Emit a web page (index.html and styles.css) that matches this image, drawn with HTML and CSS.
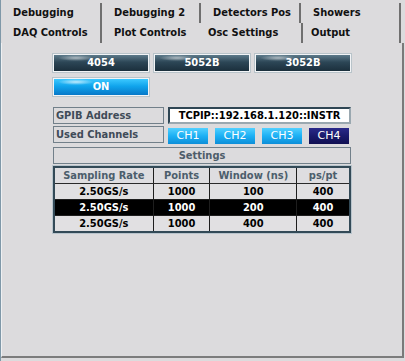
FILE: index.html
```html
<!DOCTYPE html>
<html lang="en">
<head>
    <meta charset="UTF-8">
    <title>Osc Settings</title>
    <link rel="stylesheet" href="styles.css">
</head>
<body>
    <div class="window">
        <div class="tabs">
            <div class="tab-row">
                <div class="tab w101">Debugging</div>
                <div class="tab w99">Debugging 2</div>
                <div class="tab w100">Detectors Pos</div>
                <div class="tab w100">Showers</div>
            </div>
            <div class="tab-row">
                <div class="tab w101">DAQ Controls</div>
                <div class="tab w99 no-edge">Plot Controls</div>
                <div class="tab w102 selected">Osc Settings</div>
                <div class="tab w98 last">Output</div>
            </div>
        </div>

        <div class="panel">
            <div class="content">
                <div class="btn-row">
                    <div class="btn dark">4054</div>
                    <div class="btn dark">5052B</div>
                    <div class="btn dark">3052B</div>
                </div>
                <div class="btn-row">
                    <div class="btn bright">ON</div>
                </div>

                <div class="field-row first">
                    <div class="label">GPIB Address</div>
                    <div class="input">TCPIP::192.168.1.120::INSTR</div>
                </div>
                <div class="field-row">
                    <div class="label">Used Channels</div>
                    <div class="channels">
                        <div class="ch">CH1</div>
                        <div class="ch">CH2</div>
                        <div class="ch">CH3</div>
                        <div class="ch active">CH4</div>
                    </div>
                </div>

                <div class="section-title">Settings</div>

                <table class="settings">
                    <thead>
                        <tr>
                            <th class="c1">Sampling Rate</th>
                            <th class="c2">Points</th>
                            <th class="c3">Window (ns)</th>
                            <th class="c4">ps/pt</th>
                        </tr>
                    </thead>
                    <tbody>
                        <tr><td>2.50GS/s</td><td>1000</td><td>100</td><td>400</td></tr>
                        <tr class="picked"><td>2.50GS/s</td><td>1000</td><td>200</td><td>400</td></tr>
                        <tr><td>2.50GS/s</td><td>1000</td><td>400</td><td>400</td></tr>
                    </tbody>
                </table>
            </div>
        </div>
    </div>
</body>
</html>
```

FILE: styles.css
```css
body {
    margin: 0;
    background: #dcdbdd;
    font-family: 'DejaVu Sans Condensed', 'DejaVu Sans', sans-serif;
    font-size: 11px;
    font-weight: bold;
    color: #111;
}
.window {
    width: 405px;
    height: 361px;
    box-sizing: border-box;
    border-left: 1px solid #7f98a8;
}
.tabs {
    padding-top: 3px;
}
.tab-row {
    display: flex;
    height: 20px;
}
.tab {
    box-sizing: border-box;
    height: 20px;
    line-height: 20px;
    padding-left: 12px;
    border-right: 2px solid #6f6f6f;
    color: #111;
    white-space: nowrap;
}
.tab.no-edge {
    border-right-color: transparent;
}
.tab.selected {
    padding-left: 7px;
}
.tab.last {
    padding-left: 8px;
}
.w101 { width: 101px; }
.w100 { width: 100px; }
.w99 { width: 99px; }
.w102 { width: 102px; }
.w98 { width: 98px; }
.panel {
    height: 315px;
    width: 403px;
    box-sizing: border-box;
    border-left: 1px solid #eef0f2;
    border-right: 2px solid #7a7a7a;
    border-bottom: 2px solid #7c7c7c;
    padding-top: 11px;
}
.content {
    margin-left: 51px;
    width: 298px;
}
.btn-row {
    display: flex;
    gap: 5px;
    margin-bottom: 6px;
}
.btn {
    width: 96px;
    height: 18px;
    box-sizing: border-box;
    border: 1px solid #f2f4f6;
    outline: 1px solid #b9c4ca;
    text-align: center;
    line-height: 16px;
    color: #fff;
}
.btn.dark {
    background:
        radial-gradient(ellipse 18px 3px at 22px 3px, rgba(255,255,255,0.55), rgba(255,255,255,0) 100%),
        linear-gradient(#5d7a8a, #2c4656 45%, #1b2f3c);
}
.btn.bright {
    background:
        radial-gradient(ellipse 18px 3px at 22px 3px, rgba(255,255,255,0.7), rgba(255,255,255,0) 100%),
        linear-gradient(#3cc8ff, #10a4ec 45%, #0778c8);
}
.field-row {
    display: flex;
    gap: 4px;
    margin-bottom: 2px;
    height: 17px;
}
.field-row.first {
    margin-top: 11px;
}
.label {
    width: 111px;
    box-sizing: border-box;
    border: 1px solid #72808a;
    color: #3f4b58;
    padding-left: 2px;
    line-height: 15px;
}
.input {
    flex: 1;
    box-sizing: border-box;
    background: #fff;
    border: 2px solid #2f4654;
    border-right-color: #9aa8b0;
    border-bottom-color: #9aa8b0;
    text-align: center;
    line-height: 13px;
    color: #000;
}
.channels {
    flex: 1;
    display: flex;
    gap: 7px;
    padding-top: 2px;
}
.ch {
    width: 40px;
    height: 16px;
    box-sizing: border-box;
    background: linear-gradient(#52d0ff, #1cb0f4 50%, #0c8ed8);
    color: #fff;
    font-weight: normal;
    text-align: center;
    line-height: 16px;
    font-family: 'DejaVu Sans', sans-serif;
    font-size: 11px;
}
.ch.active {
    background: linear-gradient(#2b2a8a, #1a1a6c 50%, #110f52);
}
.section-title {
    margin-top: 4px;
    height: 17px;
    box-sizing: border-box;
    border: 1px solid #72808a;
    color: #4e5d6a;
    text-align: center;
    line-height: 15px;
}
.settings {
    margin-top: 2px;
    width: 298px;
    border-collapse: collapse;
    border: 2px solid #334a57;
    outline: 1px solid #b8c4cc;
    font-size: 11px;
}
.settings th,
.settings td {
    height: 15px;
    padding: 0;
    text-align: center;
    border: 1px solid #1e1e1e;
    line-height: 14px;
}
.settings th {
    color: #4c5e6c;
    background: #dedde0;
    border-bottom-color: #2a2a2a;
}
.settings td {
    background: #e1e0e2;
    color: #000;
}
.settings .picked td {
    background: #000;
    color: #fff;
}
.c1 { width: 98px; }
.c2 { width: 56px; }
.c3 { width: 86px; }
.c4 { width: 52px; }
```
